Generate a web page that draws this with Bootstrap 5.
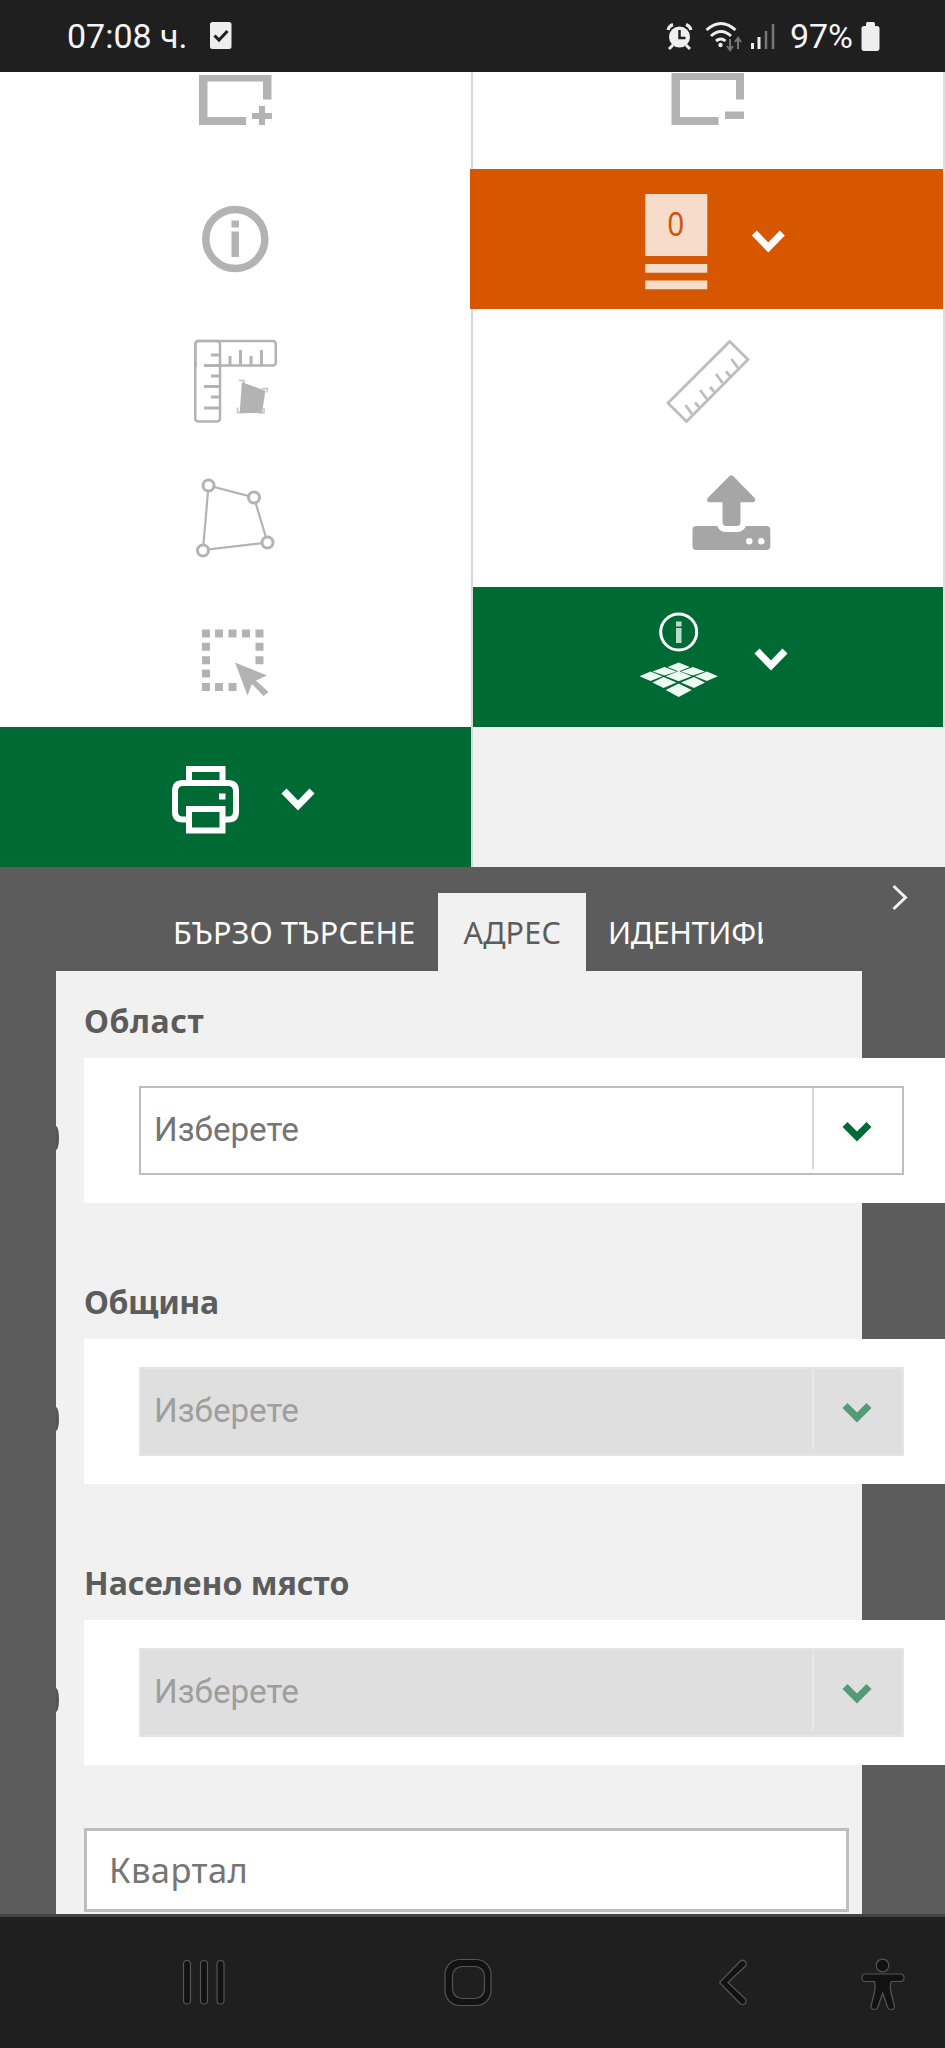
<!DOCTYPE html>
<html lang="bg">
<head>
<meta charset="utf-8">
<meta name="viewport" content="width=device-width, initial-scale=1">
<title>Търсене по адрес</title>
<link href="https://cdn.jsdelivr.net/npm/bootstrap@5.3.0/dist/css/bootstrap.min.css" rel="stylesheet">
<style>
  body { font-family: "Noto Sans", sans-serif; background: #5c5c5c; height: 2048px; overflow: hidden; }
  svg { display: block; flex: none; }
  .statusbar { height: 72px; background: #1f1f1f; color: #f5f5f5; font: 34px/1 Roboto, sans-serif; padding: 0 65px 0 67px; }
  .st-check { margin-left: 21px; }
  .st-pct { margin: 0 8px 0 11px; }
  .tools { height: 795px; background: #fff; }
  .tools-left { width: 471px; }
  .tools-right { width: 474px; border-left: 2px solid #d8d8d8; border-right: 2px solid #dedede; }
  .tile { height: 139px; color: #b3b3b3; }
  .tile-top { height: 97px; }
  .tile-tall { height: 140px; }
  .tile-green { background: #006a35; color: #fff; }
  .tile-orange { background: #d65700; color: #fff; margin-left: -3px; }
  .tile-empty { background: #f1f1f1; margin-right: -2px; }
  .search { height: 1047px; }
  .tabs { height: 104px; padding: 26px 0 0 154px; }
  .tabs-clip { width: 609px; overflow: hidden; }
  .tab-item { color: #fff; font-size: 30.5px; letter-spacing: .2px; line-height: 78px; height: 78px; white-space: nowrap; padding-left: 22.5px; flex: none; }
  .tab-first { width: 283.5px; padding-left: 19px; }
  .tab-on { width: 148px; padding-left: 26px; background: #f1f1f1; color: #5c5c5c; }
  .tab-last { letter-spacing: -.3px; }
  .panel-body { width: 806px; height: 943px; margin-left: 56px; padding-left: 28px; background: #f1f1f1; }
  .field { height: 281px; }
  .field-name { height: 87px; padding-top: 25px; color: #5c5c5c; font-weight: 700; font-size: 32px; line-height: 50px; white-space: nowrap; }
  .name-wide { letter-spacing: .6px; }
  .name-tight { letter-spacing: -.4px; }
  .field-box { width: 861px; height: 145px; background: #fff; padding: 28px 41px 28px 55px; position: relative; }
  .field-box::before { content: ""; position: absolute; left: -28px; top: 68px; width: 3px; height: 24px; background: #555; border-radius: 0 3px 3px 0 / 0 12px 12px 0; }
  .picker { height: 89px; border: 2px solid #bebebe; color: #757575; font: 33.2px/1 Roboto, sans-serif; }
  .picker-text { width: 671px; padding: 0 0 1px 13px; }
  .picker-btn { width: 90px; height: 81px; border-left: 2px solid #d8d8d8; color: #006a35; }
  .picker-off { background: #dfdfdf; border-color: #e5e5e5; color: #9e9e9e; }
  .picker-off .picker-btn { border-color: #e7e7e7; color: #539a76; }
  .quarter { width: 765px; height: 84px; margin-top: 14px; background: #fff; border: 3px solid #bebebe; color: #757575; font-size: 34.5px; letter-spacing: .4px; line-height: 78px; padding-left: 22px; }
  .navbar-keys { height: 134px; background: #1f1f1f; border-top: 3px solid #444; }
</style>
</head>
<body>
<header class="statusbar d-flex align-items-center">
  <span>07:08 ч.</span>
  <svg class="st-check" width="24" height="28" viewBox="208 22 24 28"><rect x="209" y="22" width="21.500" height="27" rx="2.500" fill="#eee"/><path d="M213.500 35.500l4.500 4.500 8.500-9" fill="none" stroke="#1f1f1f" stroke-width="3"/></svg>
  <div class="d-flex align-items-center ms-auto">
    <svg width="115" height="34" viewBox="664 19 115 34" fill="none" stroke="#eee">
      <circle cx="679.500" cy="37" r="10.500" fill="#eee" stroke="none"/>
      <path d="M679.500 30v8h6" stroke="#1f1f1f" stroke-width="2.500"/>
      <path d="M668 30q1-4 5-5.500M691 30q-1-4-5-5.500M673 45l-4 4M686 45l4 4" stroke-width="3"/>
      <path d="M706.500 30q14.500-13 29 0M711 36q10-9 20 0M716 41q5-4 9.500 0" stroke-width="3"/><circle cx="720.500" cy="45" r="2.200" fill="#eee" stroke="none"/>
      <path d="M730 39v10m-3-3l3 4 3-4M738 49V39m-3 3l3-4 3 4" stroke="#777" stroke-width="2"/>
      <path d="M752.500 43v6M759 37v12" stroke-width="3"/><path d="M766 31v18M773 24v25" stroke="#777" stroke-width="2.500"/>
    </svg>
    <span class="st-pct">97%</span>
    <svg width="19" height="30" viewBox="860 21 19 30" fill="#eee"><path d="M865 24q0-2 1.500-2h6q1.500 0 1.500 2v2h2q2.500 0 2.500 2.500V48q0 3-2.500 3h-13q-2.500 0-2.500-3V28.500Q860.500 26 863 26h2z"/></svg>
  </div>
</header>

<section class="tools d-flex">
  <div class="tools-left">
    <div class="tile tile-top d-flex justify-content-center">
      <svg width="101" height="97" viewBox="185 72 101 97" fill="currentColor"><path d="M199 75h72.500v24.500H263V81.500H207.500V117H246v8H199zM259 106h6v7h7v6h-7v6h-6v-6h-7v-6h7z"/></svg>
    </div>
    <div class="tile tile-tall d-flex justify-content-center">
      <svg width="101" height="140" viewBox="185 169 101 140" fill="currentColor"><circle cx="235.300" cy="239" r="29.500" fill="none" stroke="currentColor" stroke-width="7.500"/><path d="M231.500 220.500h7.500v7h-7.500zM231.500 231.500h7.500V257h-7.500z"/></svg>
    </div>
    <div class="tile d-flex justify-content-center">
      <svg width="101" height="139" viewBox="185 309 101 139" fill="none" stroke="currentColor" stroke-width="2.500"><rect x="195.300" y="341" width="80.500" height="24.500" rx="3"/><rect x="195.300" y="341" width="24.700" height="80.500" rx="3"/><path d="M197 365.500h7" stroke="#fff" stroke-width="3.500"/><path d="M211 355h9M204 365.500h16M211 376h9M204 386.500h16M211 397h9M204 408h16M230 365v-9M240.500 365v-15M251 365v-9M261.500 365v-15" stroke-width="3"/><path d="M243 384l21 7.500-3 20-20 .5z" fill="currentColor"/><path d="M239 380.500h5v4M262 388.500h5.500l-1 4M237.500 407.500v5h5M258.500 413h5.500v-5" stroke-width="1.500" opacity=".8"/></svg>
    </div>
    <div class="tile d-flex justify-content-center">
      <svg width="101" height="139" viewBox="185 448 101 139" fill="#fff" stroke="currentColor" stroke-width="3"><path d="M208.500 485.500L254 497.500 267.500 542.500 203 550z" stroke-width="2.200"/><circle cx="208.500" cy="485.500" r="5.500"/><circle cx="254" cy="497.500" r="5.500"/><circle cx="267.500" cy="542.500" r="5.500"/><circle cx="203" cy="550.500" r="5.500"/></svg>
    </div>
    <div class="tile tile-tall d-flex justify-content-center">
      <svg width="101" height="140" viewBox="185 587 101 140" fill="currentColor"><path d="M202 629.500h8v8h-8zm13 0h8v8h-8zm13.500 0h8v8h-8zm13.500 0h8v8h-8zm13.500 0h8v8h-8zm0 13.300h8v8h-8zm0 13.400h8v8h-8zM202 642.800h8v8h-8zm0 13.400h8v8h-8zm0 13.400h8v8h-8zm0 13.400h8v8h-8zm13 0h8v8h-8zm13.500 0h8v8h-8z"/><path d="M235 662.500l32 13-11 5 12.500 11.500-5 4-11.500-12-4.500 11.500z"/></svg>
    </div>
    <div class="tile tile-tall tile-green d-flex justify-content-center">
      <svg width="171" height="140" viewBox="150 727 171 140" fill="none" stroke="currentColor" stroke-width="6"><path d="M189 782.500V769h33.500v13.500"/><path d="M188 819.500h-5.500q-7.500 0-7.500-8V791q0-8 8-8h45q8 0 8 8v20.500q0 8-7.500 8H223"/><path d="M189 809h33.500v21.500H189z"/><path d="M219 793.500h6.500v6H219z" fill="currentColor" stroke="none"/><path d="M284 791l14 14.500 14-14.500" stroke-width="7"/></svg>
    </div>
  </div>
  <div class="tools-right">
    <div class="tile tile-top d-flex justify-content-center">
      <svg width="200" height="97" viewBox="608 72 200 97" fill="currentColor"><path d="M671.500 73h72.500v26.500h-8V80H680v37h38.500v8h-47zM725 111.500h19v7.500h-19z"/></svg>
    </div>
    <div class="tile tile-tall tile-orange d-flex justify-content-center">
      <svg width="201" height="140" viewBox="606 169 201 140" fill="#f7dccb"><path d="M645.300 194h62v62h-62zM645.300 264h62v8.700h-62zM645.300 280.500h62v8.700h-62z"/><text x="675.700" y="236" text-anchor="middle" font-family="Noto Sans" font-size="32" textLength="17" lengthAdjust="spacingAndGlyphs" fill="#c8590f">0</text><path d="M754.300 233l14 14.500 14-14.500" fill="none" stroke="#fff" stroke-width="7"/></svg>
    </div>
    <div class="tile d-flex justify-content-center">
      <svg width="200" height="139" viewBox="608 309 200 139" fill="none" stroke="#bdbdbd" stroke-width="2.800"><path d="M729.700 341.500L748 359.500 686.500 421.500 668 403z"/><path d="M692 414l-6.500-9M699 407l-4-4.500M707 399l-7-9M714 391.500l-4-4.500M722.500 383l-6.500-9M730 376l-4-4.500M738 368l-6.500-9"/></svg>
    </div>
    <div class="tile d-flex justify-content-center">
      <svg width="200" height="139" viewBox="608 448 200 139" fill="#a6a6a6"><path d="M729.500 476q1.800-1.500 3.600 0l21.500 22q2 4-1.600 4.200H740.500V522q0 4-3.500 4h-11q-3.500 0-3.500-4v-19.800H709.500q-3.600-.2-1.800-4.200z"/><path d="M696.500 526H717q3 6 9 6h11q6 0 9-6h20.300q4 0 4 4v16q0 4-4 4h-69.800q-4 0-4-4v-16q0-4 4-4z"/><circle cx="749.300" cy="541.300" r="3.200" fill="#fff"/><circle cx="761.300" cy="541.300" r="3.200" fill="#fff"/></svg>
    </div>
    <div class="tile tile-tall tile-green d-flex justify-content-center">
      <svg width="200" height="140" viewBox="608 587 200 140" fill="#eefaf3"><circle cx="678.700" cy="632" r="18" fill="none" stroke="currentColor" stroke-width="3"/><path d="M676 621.500h5.500v5H676zM676 628h5.500v15H676z" fill="#b9dcc9"/>
      <path d="M678.700 662.500l11 4.500-11 4.500-11-4.500zM664.500 667l12 4.500-12 4-12-4zM692.900 667l12 4.500-12 4-12-4zM650.500 671.500l12 4.800-12 4.800-11-4.800zM678.700 671l13 5.300-13 5-13-5zM706.900 671.500l11 4.800-11 4.800-12-4.800zM663.500 677l13 5.500-13 5.500-11-5.500zM694 677l11 5.500-11 5.500-13-5.500zM678.700 683.500l13 6.500-13 7-13-7z"/>
      <path d="M757 651l14 14.500 14-14.500" fill="none" stroke="#fff" stroke-width="7"/></svg>
    </div>
    <div class="tile tile-tall tile-empty"></div>
  </div>
</section>

<section class="search">
  <div class="tabs d-flex">
    <nav class="tabs-clip d-flex">
      <div class="tab-item tab-first">БЪРЗО ТЪРСЕНЕ</div>
      <div class="tab-item tab-on">АДРЕС</div>
      <div class="tab-item tab-last">ИДЕНТИФИКАТОР</div>
    </nav>
    <svg class="ms-auto me-3" width="40" height="40" viewBox="889 893 40 40" overflow="visible" fill="none" stroke="#f1f1f1" stroke-width="3"><path d="M893.500 886l12 11.500-12 11.500"/></svg>
  </div>
  <div class="panel-body">
    <div class="field">
      <div class="field-name name-wide">Област</div>
      <div class="field-box"><div class="picker d-flex"><div class="picker-text d-flex align-items-center">Изберете</div><div class="picker-btn"><svg width="86" height="81" viewBox="814 1088 86 81" fill="none" stroke="currentColor" stroke-width="7"><path d="M845 1124.500l12 12 12-12"/></svg></div></div></div>
    </div>
    <div class="field">
      <div class="field-name name-tight">Община</div>
      <div class="field-box"><div class="picker picker-off d-flex"><div class="picker-text d-flex align-items-center">Изберете</div><div class="picker-btn"><svg width="86" height="81" viewBox="814 1088 86 81" fill="none" stroke="currentColor" stroke-width="7"><path d="M845 1124.500l12 12 12-12"/></svg></div></div></div>
    </div>
    <div class="field">
      <div class="field-name">Населено място</div>
      <div class="field-box"><div class="picker picker-off d-flex"><div class="picker-text d-flex align-items-center">Изберете</div><div class="picker-btn"><svg width="86" height="81" viewBox="814 1088 86 81" fill="none" stroke="currentColor" stroke-width="7"><path d="M845 1124.500l12 12 12-12"/></svg></div></div></div>
    </div>
    <div class="quarter">Квартал</div>
  </div>
</section>

<footer class="navbar-keys d-flex">
  <svg width="945" height="131" viewBox="0 1917 945 131" fill="#121212" stroke="#555" stroke-width="1.200">
    <rect x="183.500" y="1960.500" width="7" height="43.500" rx="3.500"/><rect x="200.500" y="1960.500" width="7" height="43.500" rx="3.500"/><rect x="217" y="1960.500" width="7" height="43.500" rx="3.500"/>
    <rect x="445" y="1959.500" width="46" height="46" rx="15"/><rect x="452.500" y="1966.500" width="32" height="32" rx="9.500" fill="#1f1f1f"/>
    <path d="M740 1961.500q3-2.500 5.500 0 1.500 2.500 0 4.500L728 1982.500l17.500 16.500q1.500 2.500 0 4.500-3 2-5.500 0l-20.500-21z"/>
    <circle cx="882.500" cy="1965.500" r="6.300"/>
    <path d="M865.500 1974h35q3.500 0 3.500 3.700t-3.500 3.800H891q-1.500 5 0 11l3.500 14q0 3-3.500 3-3 0-3.500-2.500l-4.800-14-4.800 14q-.5 2.500-3.500 2.500t-3.500-3l3.500-14q1.500-6 0-11h-8.900q-3.500 0-3.500-3.800t3.500-3.700z"/>
  </svg>
</footer>
<script src="https://cdn.jsdelivr.net/npm/bootstrap@5.3.0/dist/js/bootstrap.bundle.min.js"></script>
</body>
</html>
